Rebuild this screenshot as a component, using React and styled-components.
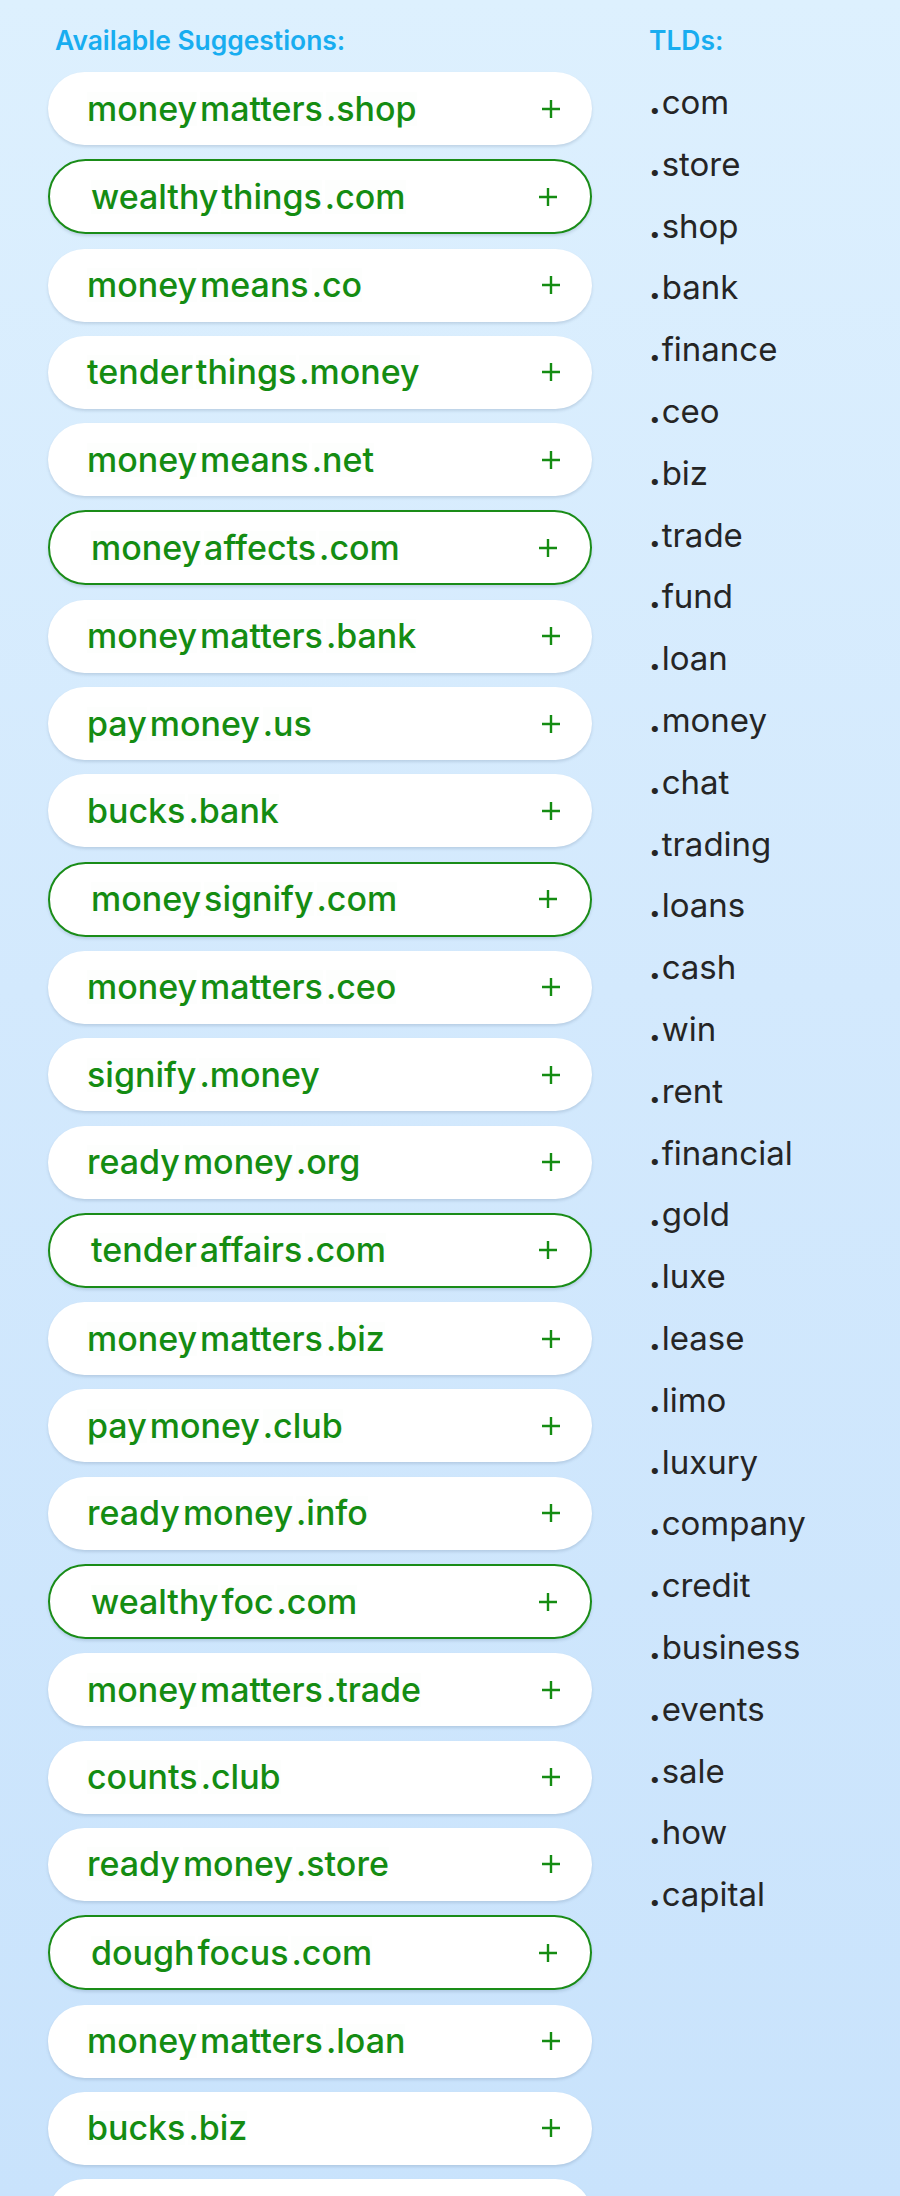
import styled, { createGlobalStyle } from "styled-components";

const GlobalStyle = createGlobalStyle`
  html, body {
    margin: 0;
    padding: 0;
  }
  body {
    background: linear-gradient(180deg, #ddf0fe 0%, #d3e9fd 45%, #c9e3fc 100%);
    min-height: 2196px;
    font-family: Inter, "Noto Sans", sans-serif;
  }
`;

const Page = styled.div`
  display: flex;
  align-items: flex-start;
  gap: 57px;
  padding: 24px 0 0 48px;
  height: 2172px;
  overflow: hidden;
`;

const Column = styled.section`
  display: flex;
  flex-direction: column;
  width: ${({ width }) => width}px;
`;

const Heading = styled.h2`
  margin: 0 0 15px;
  padding-left: ${({ indent }) => indent || 0}px;
  font-size: 26.4px;
  line-height: 33px;
  font-weight: 600;
  color: #18adf0;
  white-space: nowrap;
`;

const SuggestionList = styled.div`
  display: flex;
  flex-direction: column;
  gap: 14.3px;
`;

const Pill = styled.div`
  box-sizing: border-box;
  display: flex;
  align-items: center;
  justify-content: space-between;
  height: ${({ featured }) => (featured ? 75 : 73)}px;
  padding: ${({ featured }) => (featured ? "0 33px 0 41px" : "0 32px 0 39px")};
  background: #ffffff;
  border-radius: 40px;
  border: ${({ featured }) => (featured ? "2px solid #1a8c18" : "none")};
  box-shadow: 0 2px 3px rgba(60, 90, 120, 0.18);
`;

const DomainName = styled.div`
  display: flex;
  gap: 3px;
  font-size: 34px;
  font-weight: 500;
  color: #148c12;
  line-height: 1;
`;

const Part = styled.span`
  background: #fdfefd;
`;

const AddButton = styled.span`
  display: flex;
  width: 18px;
  height: 18px;
  color: #148c12;
`;

const TldList = styled.ul`
  list-style: none;
  margin: 0;
  padding: 0;
`;

const Tld = styled.li`
  font-size: 33px;
  line-height: 61.8px;
  color: #252525;
  white-space: nowrap;
`;

const Dot = styled.span`
  font-weight: 800;
  margin-right: 1px;
`;

const suggestions = [
  ["money", "matters", ".shop"],
  ["wealthy", "things", ".com"],
  ["money", "means", ".co"],
  ["tender", "things", ".money"],
  ["money", "means", ".net"],
  ["money", "affects", ".com"],
  ["money", "matters", ".bank"],
  ["pay", "money", ".us"],
  ["bucks", ".bank"],
  ["money", "signify", ".com"],
  ["money", "matters", ".ceo"],
  ["signify", ".money"],
  ["ready", "money", ".org"],
  ["tender", "affairs", ".com"],
  ["money", "matters", ".biz"],
  ["pay", "money", ".club"],
  ["ready", "money", ".info"],
  ["wealthy", "foc", ".com"],
  ["money", "matters", ".trade"],
  ["counts", ".club"],
  ["ready", "money", ".store"],
  ["dough", "focus", ".com"],
  ["money", "matters", ".loan"],
  ["bucks", ".biz"],
  // the next row starts at the bottom edge, its text is still below the fold
  [],
];

const tlds = [
  "com", "store", "shop", "bank", "finance", "ceo", "biz", "trade", "fund",
  "loan", "money", "chat", "trading", "loans", "cash", "win", "rent",
  "financial", "gold", "luxe", "lease", "limo", "luxury", "company", "credit",
  "business", "events", "sale", "how", "capital",
];

const PlusIcon = () => (
  <svg width="18" height="18" viewBox="0 0 18 18">
    <path d="M9 0v18M0 9h18" stroke="currentColor" strokeWidth="2.4" fill="none" />
  </svg>
);

export default function App() {
  return (
    <>
      <GlobalStyle />
      <Page>
        <Column width={544}>
          <Heading indent={7}>Available Suggestions:</Heading>
          <SuggestionList>
            {suggestions.map((parts, i) => {
              const featured = parts[parts.length - 1] === ".com";
              return (
                <Pill key={i} featured={featured}>
                  <DomainName>
                    {parts.map((p) => (
                      <Part key={p}>{p}</Part>
                    ))}
                  </DomainName>
                  <AddButton>
                    <PlusIcon />
                  </AddButton>
                </Pill>
              );
            })}
          </SuggestionList>
        </Column>
        <Column width={200}>
          <Heading>TLDs:</Heading>
          <TldList>
            {tlds.map((t) => (
              <Tld key={t}>
                <Dot>.</Dot>
                {t}
              </Tld>
            ))}
          </TldList>
        </Column>
      </Page>
    </>
  );
}
